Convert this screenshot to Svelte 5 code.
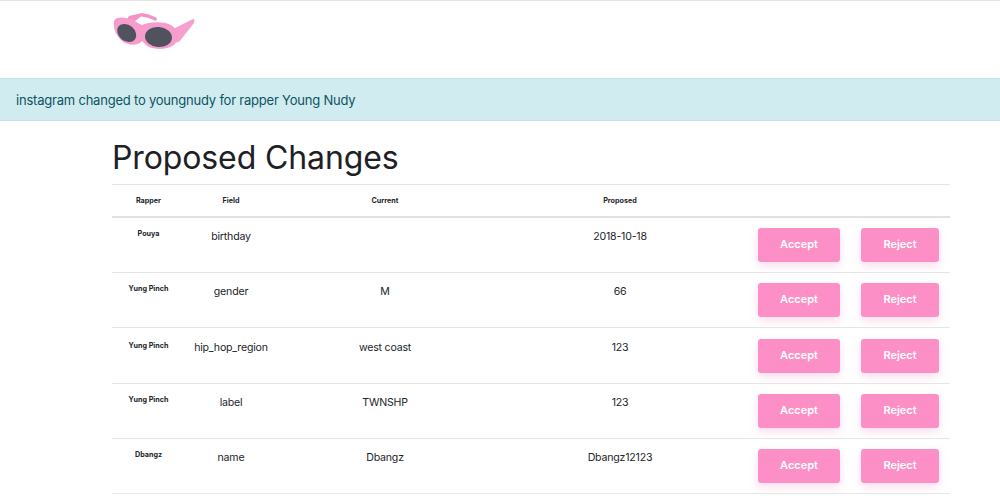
<script>
  const rows = [
    ['Pouya', 'birthday', '', '2018-10-18'],
    ['Yung Pinch', 'gender', 'M', '66'],
    ['Yung Pinch', 'hip_hop_region', 'west coast', '123'],
    ['Yung Pinch', 'label', 'TWNSHP', '123'],
    ['Dbangz', 'name', 'Dbangz', 'Dbangz12123']
  ];
</script>

<div class="page">
  <header class="nav">
    <svg class="logo" viewBox="0 0 82 38" width="82" height="38" aria-label="Sunglasses logo">
      <path d="M60 16 L80 6 L81.5 6.5 L81 10 L66 29 L60 30 Z" fill="#f6a0cd" />
      <path d="M14 6 L16 3 L29 0 L36 1.5 L44 5 L43 8 L34 4.5 L28 3.5 L22 8 Z" fill="#f392c4" />
      <path d="M1 8 C3 3 12 4 20 7 C24 9 26 11 29 12 C36 9 50 8 58 12 C66 17 67 26 61 32 C52 38 36 37 31 30 L29 28 C25 33 15 33 9 28 C3 23 0 15 1 8 Z" fill="#f79dcd" />
      <ellipse cx="13.7" cy="20" rx="10.5" ry="8" transform="rotate(40 13.7 20)" fill="#50525e" />
      <ellipse cx="45.5" cy="24" rx="13.5" ry="10" transform="rotate(5 45.5 24)" fill="#50525e" />
    </svg>
  </header>

  <div class="alert">instagram changed to youngnudy for rapper Young Nudy</div>

  <main class="container">
    <h1>Proposed Changes</h1>
    <table>
      <colgroup>
        <col class="c-rapper" /><col class="c-field" /><col class="c-current" /><col class="c-proposed" /><col class="c-accept" /><col />
      </colgroup>
      <thead>
        <tr>
          <th>Rapper</th><th>Field</th><th>Current</th><th>Proposed</th><th></th><th></th>
        </tr>
      </thead>
      <tbody>
        {#each rows as r}
          <tr>
            <td class="name">{r[0]}</td>
            <td>{r[1]}</td>
            <td>{r[2]}</td>
            <td>{r[3]}</td>
            <td class="act"><button>Accept</button></td>
            <td class="act"><button class="reject">Reject</button></td>
          </tr>
        {/each}
      </tbody>
    </table>
  </main>
</div>

<style>
  :global(body) {
    margin: 0;
    background: #fff;
    font-family: Inter, "Liberation Sans", sans-serif;
    color: #212529;
  }
  .page {
    height: 499px;
    overflow: hidden;
    border-top: 1px solid #e4e4e4;
    box-sizing: border-box;
  }
  .nav {
    height: 77px;
    padding: 12px 0 0 113px;
    box-sizing: border-box;
  }
  .logo { display: block; }
  .alert {
    height: 43px;
    box-sizing: border-box;
    padding: 0 16px;
    display: flex;
    align-items: center;
    background: #d1ecf1;
    border-top: 1px solid #bee5eb;
    border-bottom: 1px solid #bee5eb;
    color: #0c5460;
    font-size: 13px;
    letter-spacing: -0.21px;
  }
  .container {
    width: 838px;
    margin-left: 112px;
  }
  h1 {
    margin: 0;
    height: 63px;
    padding-top: 9px;
    box-sizing: border-box;
    display: flex;
    align-items: center;
    font-size: 32px;
    font-weight: 400;
    letter-spacing: -0.12px;
    color: #1d2125;
  }
  table {
    width: 838px;
    border-collapse: collapse;
    table-layout: fixed;
  }
  .c-rapper { width: 73px; }
  .c-field { width: 92px; }
  .c-current { width: 216px; }
  .c-proposed { width: 254px; }
  .c-accept { width: 104px; }
  th {
    height: 32px;
    box-sizing: border-box;
    padding: 0;
    border-top: 1px solid #e3e5e7;
    border-bottom: 2px solid #dee2e6;
    font-size: 7.2px;
    font-weight: 700;
    text-align: center;
    vertical-align: middle;
  }
  td {
    height: 55.25px;
    box-sizing: border-box;
    padding: 12px 0 0;
    border-bottom: 1px solid #e3e5e7;
    font-size: 10.6px;
    letter-spacing: -0.2px;
    text-align: center;
    vertical-align: top;
    color: #212529;
  }
  tr:first-child td { height: 56px; }
  tr:nth-child(3) td { padding-top: 13px; }
  td.name {
    padding-top: 11px;
    font-size: 7.2px;
    font-weight: 700;
    letter-spacing: 0;
    color: #212529;
  }
  td.act { padding: 10px 0 0; }
  tr:nth-child(3) td.act { padding-top: 11px; }
  button {
    display: block;
    width: 82px;
    height: 34px;
    margin: 0 auto;
    border: 0;
    border-radius: 3px;
    background: #fd8fc7;
    color: #fff;
    font: 600 11px Inter, "Liberation Sans", sans-serif;
    box-shadow: 0 4px 8px rgba(253, 143, 199, 0.3);
    padding: 0 0 2px;
  }
  .reject { width: 78px; margin-left: 10px; }
</style>
